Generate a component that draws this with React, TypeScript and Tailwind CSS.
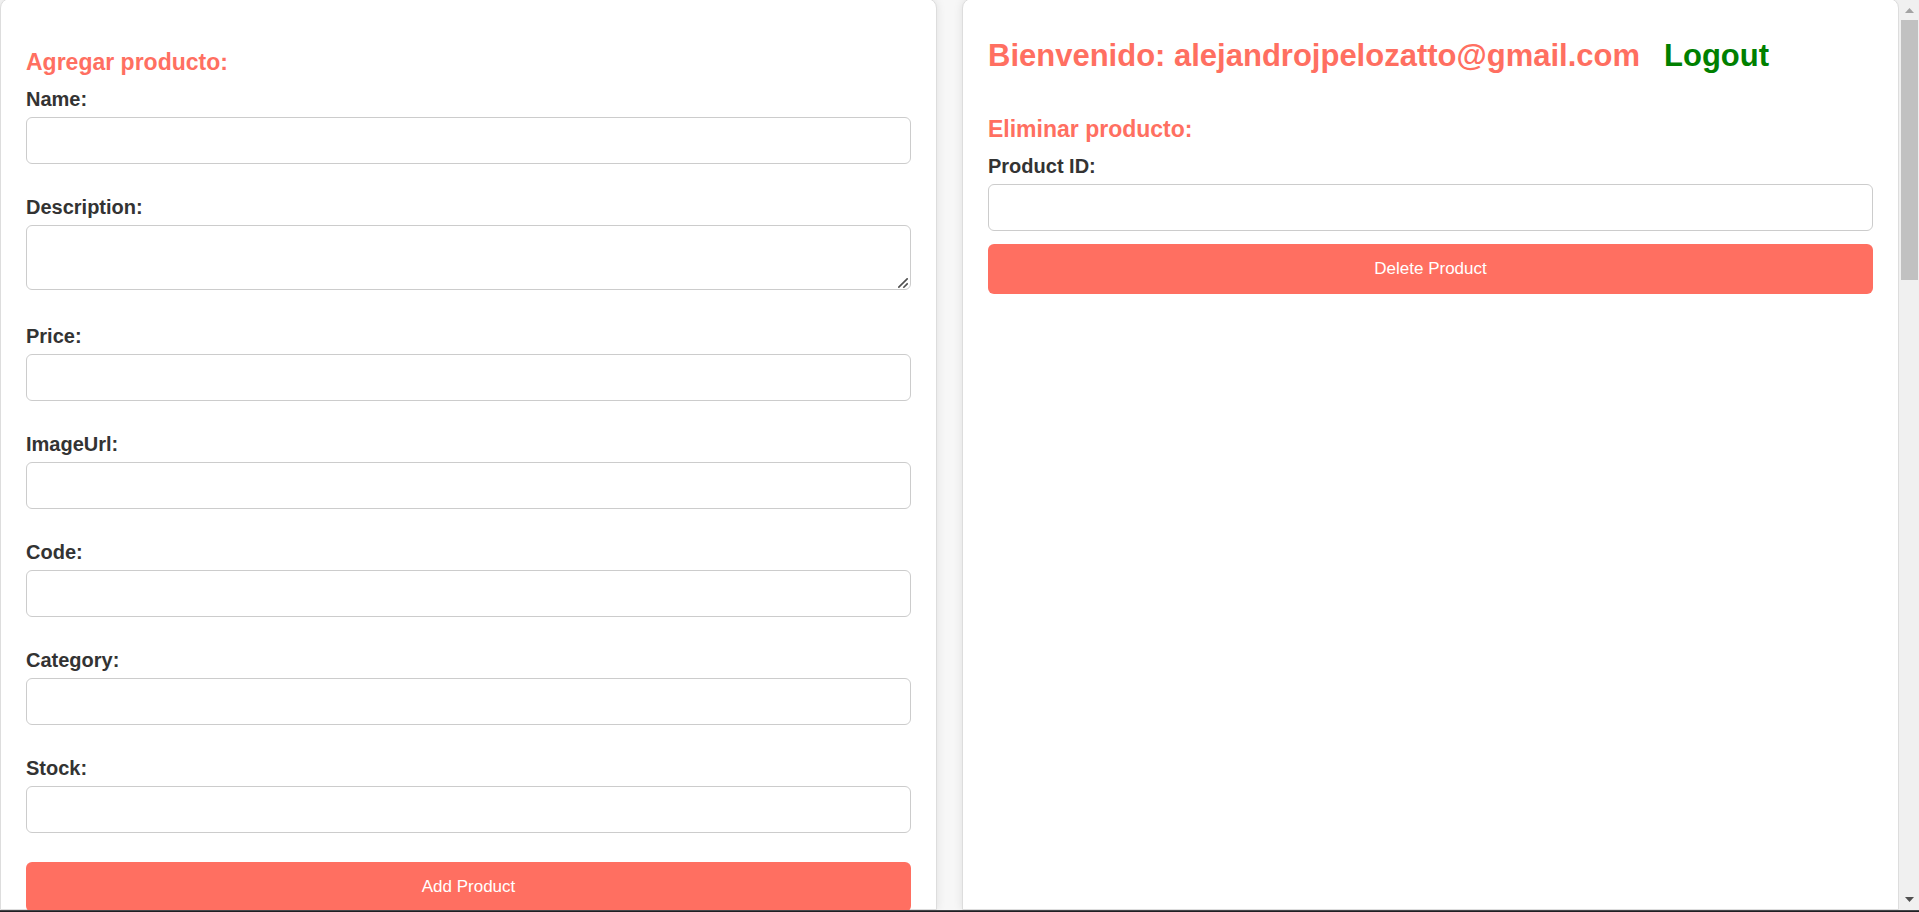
import type { ReactNode } from "react";

function Panel({ children, className }: { children: ReactNode; className: string }) {
  return (
    <section
      className={`-mt-0.5 min-w-0 flex-1 rounded-t-[10px] border border-[#dddddd] bg-white px-[25px] shadow-[0_0_10px_rgba(0,0,0,0.1)] ${className}`}
    >
      {children}
    </section>
  );
}

function Field({ id, label, multiline = false }: { id: string; label: string; multiline?: boolean }) {
  return (
    <div className="flex flex-col gap-1">
      <label htmlFor={id} className="text-xl leading-7 font-bold">
        {label}
      </label>
      {multiline ? (
        <div className="relative mb-[3px] flex">
          <textarea id={id} className="h-[65px] w-full resize-none rounded-md border border-[#cccccc] p-3 text-base outline-none" />
          <svg
            aria-hidden="true"
            className="pointer-events-none absolute right-[3px] bottom-0.5 size-2.5"
            viewBox="0 0 10 10"
            stroke="#505050"
            strokeWidth="1.6"
          >
            <path d="M0.3 9.7 9.7 0.3M5.3 9.7 9.7 5.3" />
          </svg>
        </div>
      ) : (
        <input id={id} type="text" className="h-[47px] w-full rounded-md border border-[#cccccc] p-3 text-base outline-none" />
      )}
    </div>
  );
}

function SubmitButton({ children }: { children: ReactNode }) {
  return (
    <button type="submit" className="h-[50px] w-full rounded-md bg-[#ff6f61] text-[17px] text-white">
      {children}
    </button>
  );
}

const fields = [
  { id: "name", label: "Name:" },
  { id: "description", label: "Description:", multiline: true },
  { id: "price", label: "Price:" },
  { id: "imageUrl", label: "ImageUrl:" },
  { id: "code", label: "Code:" },
  { id: "category", label: "Category:" },
  { id: "stock", label: "Stock:" },
];

export default function App() {
  return (
    <div className="flex h-screen flex-col overflow-hidden bg-[#f7f7f7] font-['Liberation_Sans',Arial,sans-serif] text-[#333333]">
      <div className="flex min-h-0 flex-1">
        <main className="flex min-w-0 flex-1 gap-[25px] overflow-hidden">
          <Panel className="pt-[47px]">
            <h2 className="mb-[7px] text-[23px] leading-8 font-bold text-[#ff6f61]">Agregar producto:</h2>
            <form className="flex flex-col gap-[29px]" onSubmit={(e) => e.preventDefault()}>
              {fields.map((f) => (
                <Field key={f.id} {...f} />
              ))}
              <SubmitButton>Add Product</SubmitButton>
            </form>
          </Panel>
          <Panel className="pt-[37px]">
            <h1 className="mb-[37px] text-[31px] leading-10 font-bold text-[#ff6f61]">
              Bienvenido: alejandrojpelozatto@gmail.com
              <a href="#logout" className="ml-6 text-[#008000]">
                Logout
              </a>
            </h1>
            <h2 className="mb-[7px] text-[23px] leading-8 font-bold text-[#ff6f61]">Eliminar producto:</h2>
            <form className="flex flex-col gap-[13px]" onSubmit={(e) => e.preventDefault()}>
              <Field id="productId" label="Product ID:" />
              <SubmitButton>Delete Product</SubmitButton>
            </form>
          </Panel>
        </main>
        <div aria-hidden="true" className="flex w-5 flex-col items-center bg-[#f0f0f0]">
          <svg className="h-5 w-[17px] shrink-0" viewBox="0 0 17 20" fill="#a3a3a3">
            <path d="M4 13 8.5 8 13 13z" />
          </svg>
          <div className="h-[260px] w-[17px] shrink-0 bg-[#c1c1c1]" />
          <svg className="mt-auto h-5 w-[17px] shrink-0" viewBox="0 0 17 20" fill="#505050">
            <path d="M4 7 8.5 12 13 7z" />
          </svg>
        </div>
      </div>
      <div className="h-0.5 shrink-0 border-t border-[#46464a] bg-[#202024]" />
    </div>
  );
}
